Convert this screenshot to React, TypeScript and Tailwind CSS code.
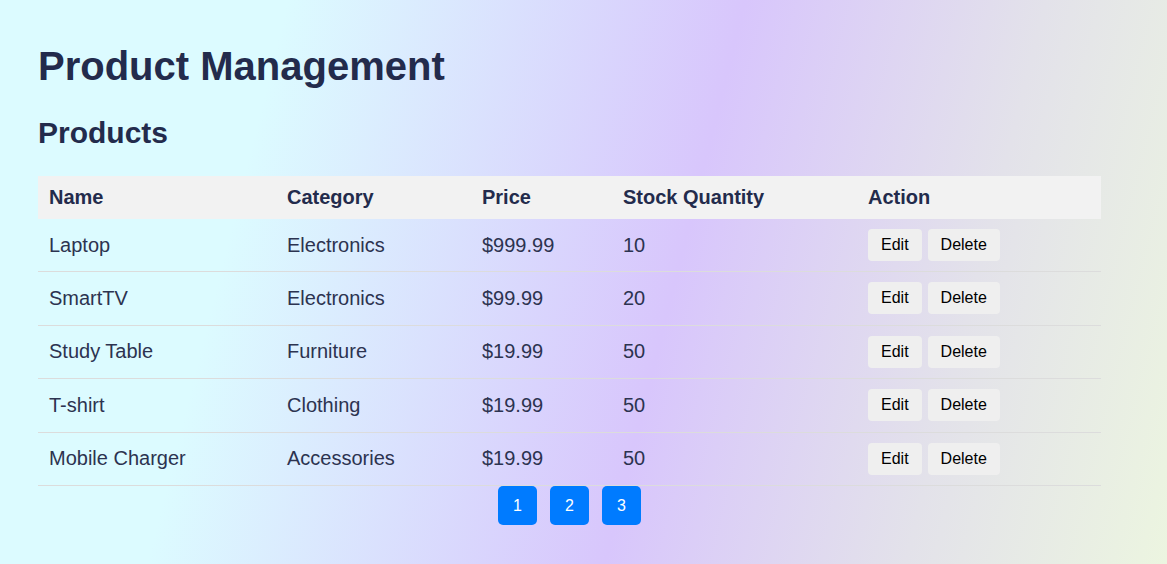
import React from "react";

const rows = [
  { name: "Laptop", category: "Electronics", price: "$999.99", qty: "10" },
  { name: "SmartTV", category: "Electronics", price: "$99.99", qty: "20" },
  { name: "Study Table", category: "Furniture", price: "$19.99", qty: "50" },
  { name: "T-shirt", category: "Clothing", price: "$19.99", qty: "50" },
  { name: "Mobile Charger", category: "Accessories", price: "$19.99", qty: "50" },
];

export default function App() {
  return (
    <div
      className="min-h-screen w-full bg-[linear-gradient(104deg,#dcfbff_22%,#d8c6fc_57%,#e3e2ea_80%,#ecf5e0_100%)] px-[38px] pt-[43px] text-[#2c3350]"
      style={{ fontFamily: '"Liberation Sans", Arial, sans-serif' }}
    >
      <h1 className="text-[40px] font-bold leading-[46px] text-[#232b4c]">Product Management</h1>
      <h2 className="mt-[26px] text-[30px] font-bold leading-[35px] text-[#232b4c]">Products</h2>
      <div className="mt-[26px] w-[1063px]">
        <table className="w-[1063px] table-fixed border-collapse text-left text-[20px] leading-[23px]">
          <colgroup>
            <col className="w-[238px]" />
            <col className="w-[195px]" />
            <col className="w-[141px]" />
            <col className="w-[245px]" />
            <col className="w-[244px]" />
          </colgroup>
          <thead>
            <tr className="bg-[#f2f2f2] text-[#232b4c]">
              <th className="h-[43px] px-[11px] font-bold">Name</th>
              <th className="px-[11px] font-bold">Category</th>
              <th className="px-[11px] font-bold">Price</th>
              <th className="px-[11px] font-bold">Stock Quantity</th>
              <th className="px-[11px] font-bold">Action</th>
            </tr>
          </thead>
          <tbody>
            {rows.map((r, i) => (
              <tr key={r.name} className="border-b border-[#dcdcdc]">
                <td className={i === 0 ? "h-[52.5px] px-[11px] align-middle" : "h-[53.5px] px-[11px] align-middle"}>
                  {r.name}
                </td>
                <td className="px-[11px] align-middle">{r.category}</td>
                <td className="px-[11px] align-middle">{r.price}</td>
                <td className="px-[11px] align-middle">{r.qty}</td>
                <td className="px-[11px] align-middle">
                  <div className="flex gap-[6px]">
                    <button className="h-[32px] rounded-[4px] bg-[#efefef] px-[13px] text-[16px] leading-[18px] text-black">
                      Edit
                    </button>
                    <button className="h-[32px] rounded-[4px] bg-[#efefef] px-[13px] text-[16px] leading-[18px] text-black">
                      Delete
                    </button>
                  </div>
                </td>
              </tr>
            ))}
          </tbody>
        </table>
        <div className="flex justify-center gap-[13px]">
          {["1", "2", "3"].map((p) => (
            <button
              key={p}
              className="flex h-[39px] w-[39px] items-center justify-center rounded-[5px] bg-[#007bff] text-[16px] text-white"
            >
              {p}
            </button>
          ))}
        </div>
      </div>
    </div>
  );
}
